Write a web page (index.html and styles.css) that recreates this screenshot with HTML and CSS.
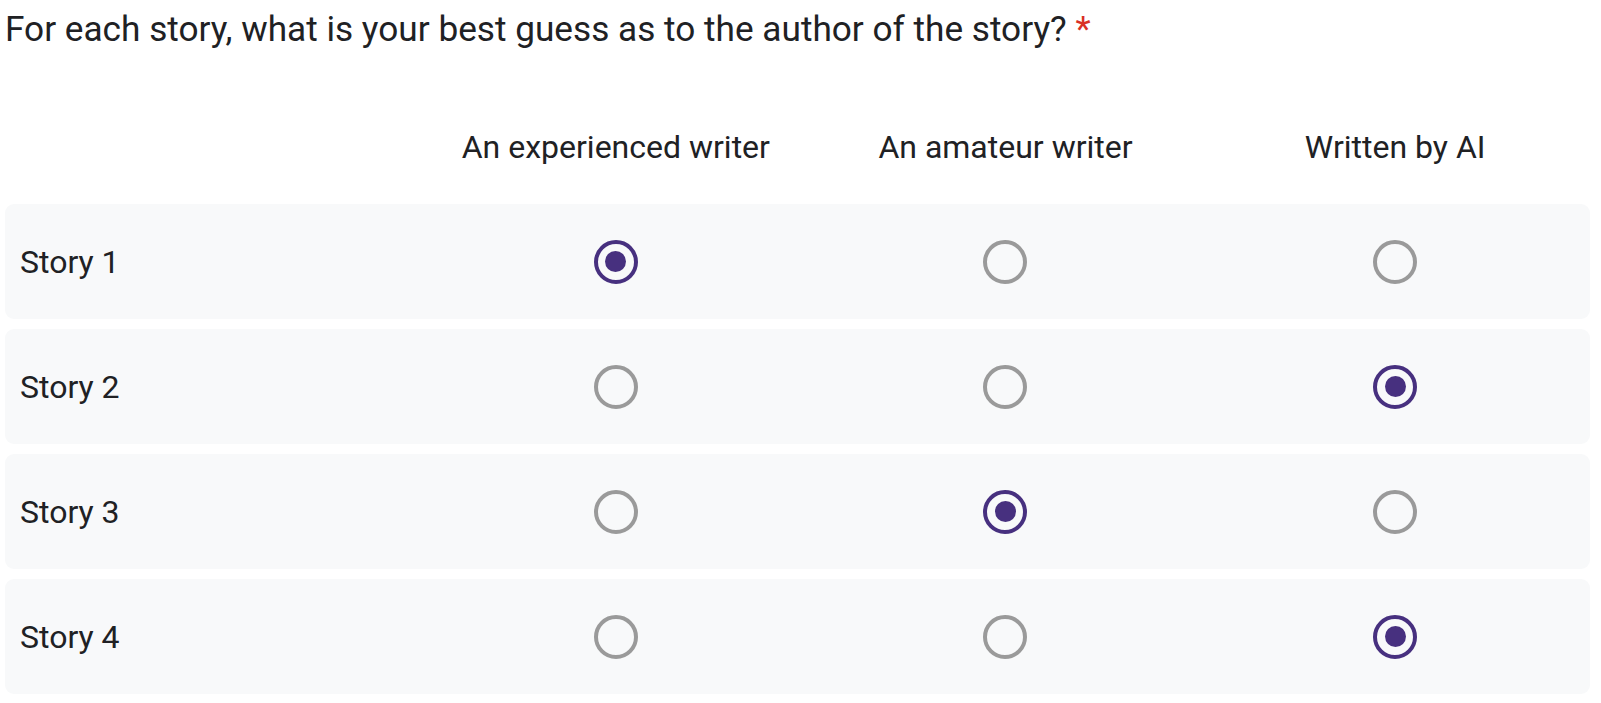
FILE: index.html
```html
<!DOCTYPE html>
<html lang="en">
<head>
<meta charset="utf-8">
<title>Grid question</title>
<link rel="stylesheet" href="styles.css">
</head>
<body>
<div class="question">
  <div class="title">For each story, what is your best guess as to the author of the story? <span class="req">*</span></div>
  <div class="grid header">
    <div></div>
    <div class="col-label">An experienced writer</div>
    <div class="col-label">An amateur writer</div>
    <div class="col-label">Written by AI</div>
  </div>
  <div class="rows">
    <div class="grid row">
      <div class="row-label">Story 1</div>
      <div class="cell"><span class="radio checked"></span></div>
      <div class="cell"><span class="radio"></span></div>
      <div class="cell"><span class="radio"></span></div>
    </div>
    <div class="grid row">
      <div class="row-label">Story 2</div>
      <div class="cell"><span class="radio"></span></div>
      <div class="cell"><span class="radio"></span></div>
      <div class="cell"><span class="radio checked"></span></div>
    </div>
    <div class="grid row">
      <div class="row-label">Story 3</div>
      <div class="cell"><span class="radio"></span></div>
      <div class="cell"><span class="radio checked"></span></div>
      <div class="cell"><span class="radio"></span></div>
    </div>
    <div class="grid row">
      <div class="row-label">Story 4</div>
      <div class="cell"><span class="radio"></span></div>
      <div class="cell"><span class="radio"></span></div>
      <div class="cell"><span class="radio checked"></span></div>
    </div>
  </div>
</div>
</body>
</html>
```

FILE: styles.css
```css
html, body {
  margin: 0;
  padding: 0;
  background: #ffffff;
}

body {
  font-family: Roboto, "Liberation Sans", sans-serif;
  color: #202124;
}

.question {
  margin: 0 11px 0 5px;
}

.title {
  font-size: 35.2px;
  line-height: 58px;
  height: 60px;
  margin-bottom: 42px;
  white-space: nowrap;
}

.req {
  color: #d93025;
}

.grid {
  display: grid;
  grid-template-columns: 416px repeat(3, 1fr);
  align-items: center;
}

.header {
  height: 90px;
}

.col-label {
  font-size: 32px;
  text-align: center;
  line-height: 40px;
}

.rows {
  display: flex;
  flex-direction: column;
  gap: 10px;
  margin-top: 12px;
}

.row {
  height: 115px;
  background: #f8f9fa;
  border-radius: 9px;
}

.row-label {
  font-size: 32px;
  padding-left: 15px;
  padding-top: 0;
}

.cell {
  display: flex;
  justify-content: center;
  padding-top: 0;
}

.radio {
  box-sizing: border-box;
  width: 44px;
  height: 44px;
  border-radius: 50%;
  border: 4.5px solid #9a9a9a;
  display: flex;
  align-items: center;
  justify-content: center;
}

.radio.checked {
  border-color: #47307f;
}

.radio.checked::after {
  content: "";
  width: 21px;
  height: 21px;
  border-radius: 50%;
  background: #47307f;
}
```
